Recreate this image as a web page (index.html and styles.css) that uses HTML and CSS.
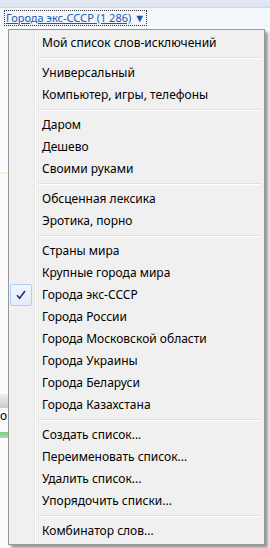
FILE: index.html
```html
<!DOCTYPE html>
<html lang="ru">
<head>
    <meta charset="UTF-8">
    <title>Списки слов</title>
    <link rel="stylesheet" href="styles.css">
</head>
<body>
    <div class="topbar"></div>
    <div class="linkrow">
        <a href="#" class="listlink"><span class="linktext">Города экс-СССР (1 286)</span> <span class="arrow">&#9660;</span></a>
    </div>
    <div class="page">
        <div class="strip yellow"></div>
        <div class="strip grey"></div>
        <div class="strip text">о</div>
        <div class="strip green"></div>
    </div>

    <!-- Dropdown menu with word lists -->
    <div class="menu">
        <div class="item">Мой список слов-исключений</div>
        <div class="sep"></div>
        <div class="item">Универсальный</div>
        <div class="item">Компьютер, игры, телефоны</div>
        <div class="sep"></div>
        <div class="item">Даром</div>
        <div class="item">Дешево</div>
        <div class="item">Своими руками</div>
        <div class="sep"></div>
        <div class="item">Обсценная лексика</div>
        <div class="item">Эротика, порно</div>
        <div class="sep"></div>
        <div class="item">Страны мира</div>
        <div class="item">Крупные города мира</div>
        <div class="item checked">
            <span class="check">
                <svg width="10" height="10" viewBox="0 0 10 10"><path d="M1 5.2 L3.6 8.2 L9 1" fill="none" stroke="#1b2f7a" stroke-width="1.6"/></svg>
            </span>
            Города экс-СССР
        </div>
        <div class="item">Города России</div>
        <div class="item">Города Московской области</div>
        <div class="item">Города Украины</div>
        <div class="item">Города Беларуси</div>
        <div class="item">Города Казахстана</div>
        <div class="sep"></div>
        <div class="item">Создать список...</div>
        <div class="item">Переименовать список...</div>
        <div class="item">Удалить список...</div>
        <div class="item">Упорядочить списки...</div>
        <div class="sep"></div>
        <div class="item">Комбинатор слов...</div>
    </div>
</body>
</html>
```

FILE: styles.css
```css
* {
    margin: 0;
    padding: 0;
    box-sizing: border-box;
}

body {
    width: 270px;
    height: 548px;
    overflow: hidden;
    background-color: #fbfbfb;
    font-family: "Noto Sans", "Open Sans", sans-serif;
    font-size: 12px;
    color: #000;
    position: relative;
}

/* Top window strip */
.topbar {
    height: 8px;
    background: linear-gradient(#e4eaf3, #dce4ef);
    border-bottom: 1px solid #d0d8e4;
}

.linkrow {
    height: 19px;
    padding: 1px 0 0 5px;
    background-color: #f3f6fa;
}

.listlink {
    display: inline-block;
    color: #1a5bb8;
    font-size: 11px;
    line-height: 14px;
    padding: 0 1px;
    outline: 1px dotted #333;
    text-decoration: none;
}

.linktext {
    text-decoration: underline;
}

.arrow {
    font-size: 11px;
    color: #1f4fa8;
}

/* Page content peeking out from under the menu */
.page {
    display: flex;
    flex-direction: column;
    padding-top: 145px;
}

.strip {
    width: 8px;
}

.yellow {
    height: 2px;
    background-color: #f6f3d2;
}

.grey {
    height: 14px;
    margin-top: 220px;
    background: linear-gradient(#f0f0f0, #c9c9c9);
}

.text {
    height: 16px;
    font-size: 12px;
    line-height: 16px;
    overflow: hidden;
}

.green {
    height: 6px;
    margin-top: 8px;
    background: linear-gradient(#7ccf7c, #a9dcb4);
}

/* Dropdown menu */
.menu {
    position: absolute;
    left: 8px;
    top: 29px;
    width: 257px;
    padding: 2px;
    border: 1px solid #979797;
    background:
        linear-gradient(to right, transparent 25px, #e2e3e3 25px, #e2e3e3 26px, #ffffff 26px, #ffffff 27px, transparent 27px),
        #f0f0f0;
    box-shadow: 3px 3px 3px rgba(0, 0, 0, 0.4);
}

.item {
    position: relative;
    height: 22px;
    line-height: 22px;
    padding-left: 31px;
    white-space: nowrap;
}

.sep {
    height: 8px;
    margin: 0 1px 0 27px;
    background: linear-gradient(transparent 3px, #e0e0e0 3px, #e0e0e0 4px, #ffffff 4px, #ffffff 5px, transparent 5px);
}

.check {
    position: absolute;
    left: -1px;
    top: 0;
    width: 22px;
    height: 22px;
    border: 1px solid #aecff7;
    border-radius: 2px;
    background: linear-gradient(#f2f7fd, #e2ecfa);
    display: flex;
    align-items: center;
    justify-content: center;
}
```
